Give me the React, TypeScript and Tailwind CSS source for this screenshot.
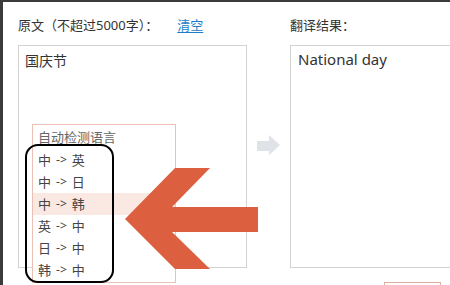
import React from "react";

const FONT = { fontFamily: '"Microsoft YaHei", "Noto Sans", "Noto Sans CJK SC", sans-serif' };

const PAIRS = [
  ["中", "英"],
  ["中", "日"],
  ["中", "韩"],
  ["英", "中"],
  ["日", "中"],
  ["韩", "中"],
];

function LangMenu() {
  return (
    <div className="absolute left-[13px] top-[78px] w-[144px] h-[159px] border border-[#ebc0b5] bg-white text-[13px] text-[#444]">
      <div className="h-[24px] leading-[24px] pl-[5px] text-[#666]">自动检测语言</div>
      {PAIRS.map(([a, b], i) => (
        <div
          key={i}
          className={"flex h-[22px] leading-[22px] pl-[5px] " + (i === 2 ? "bg-[#fae8e2]" : "")}
        >
          <span>{a}</span>
          <span className="mx-[5px] text-[12px]">{"->"}</span>
          <span>{b}</span>
        </div>
      ))}
    </div>
  );
}

export default function App() {
  return (
    <div
      className="relative w-[450px] h-[285px] overflow-hidden bg-white border-t-2 border-l-[3px] border-[#3b3b3b] text-[#333]"
      style={FONT}
    >
      <div className="flex pl-[15px] pt-[13px]">
        {/* source */}
        <div className="w-[229px] shrink-0">
          <div className="h-[20px] leading-[20px] text-[13px] flex">
            <span>原文（不超过5000字）：</span>
            <a className="ml-[19px] text-[#1e7ec8] underline underline-offset-2">清空</a>
          </div>
          <div className="relative mt-[10px] h-[223px] border border-[#d2d2d2] px-[6px] pt-[5px] text-[14px] leading-[20px]">
            国庆节
            <LangMenu />
          </div>
        </div>

        {/* middle arrow */}
        <div className="w-[43px] shrink-0 pt-[120px] pl-[10px]">
          <svg width="24" height="21" viewBox="0 0 24 21">
            <polygon points="0,6 12,6 12,0 23,10 12,20 12,16 0,16" fill="#dfe2e7" />
          </svg>
        </div>

        {/* result */}
        <div className="w-[200px] shrink-0">
          <div className="h-[20px] leading-[20px] text-[13px]">翻译结果：</div>
          <div className="mt-[10px] h-[223px] border border-[#d2d2d2] border-r-0 px-[7px] pt-[3px] text-[15px] leading-[20px]">
            National day
          </div>
          <div className="ml-[94px] mt-[14px] w-[57px] h-[24px] border border-[#e6aea1]" />
        </div>
      </div>

      {/* annotation outline */}
      <div className="absolute left-[22px] top-[142px] w-[89px] h-[139px] border-2 border-black rounded-[13px]" />

      {/* annotation arrow */}
      <svg className="absolute left-[117px] top-[163px]" width="140" height="110" viewBox="0 0 140 110">
        <polygon
          points="5,54 55,3 90,3 52,42 138,42 138,67 52,67 90,104 55,104"
          fill="#dc6040"
        />
      </svg>
    </div>
  );
}
